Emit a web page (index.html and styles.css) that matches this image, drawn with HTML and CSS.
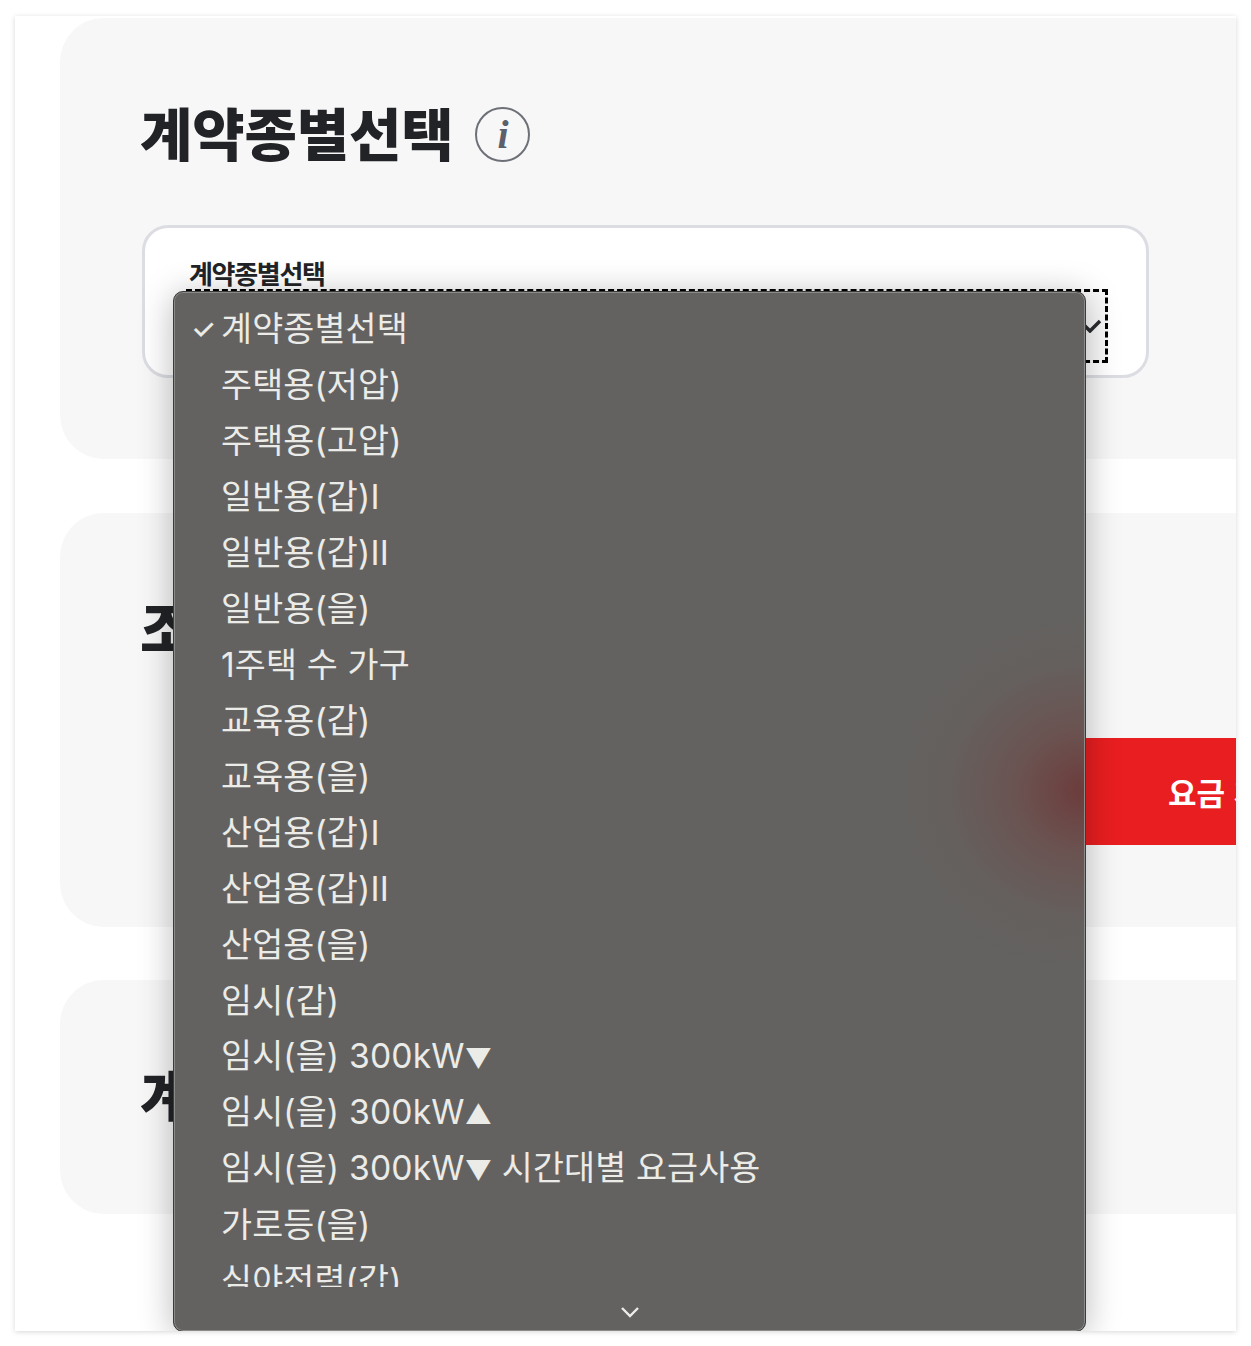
FILE: index.html
```html
<!DOCTYPE html>
<html lang="ko">
<head>
<meta charset="utf-8">
<title>계약종별선택</title>
<link rel="stylesheet" href="styles.css">
</head>
<body>
<div class="frame">
  <section class="panel panel-contract">
    <div class="heading-row">
      <h2 class="heading">계약종별선택</h2>
      <span class="info"><span class="info-i">i</span></span>
    </div>
    <div class="field-card">
      <div class="field-label">계약종별선택</div>
      <div class="select-focus">
        <svg class="select-chevron" viewBox="0 0 24 14" width="24" height="14"><path d="M2 2l10 10L22 2" fill="none" stroke="#2a2c30" stroke-width="3.5"/></svg>
      </div>
    </div>
  </section>

  <section class="panel panel-usage">
    <h2 class="heading">조회조건</h2>
    <div class="action-row">
      <button class="calc-button">요금 계산하기</button>
    </div>
  </section>

  <section class="panel panel-result">
    <h2 class="heading">계산결과</h2>
  </section>

  <div class="menu">
    <ul class="menu-list">
      <li class="menu-item"><span class="menu-check">✓</span><span>계약종별선택</span></li>
      <li class="menu-item"><span class="menu-check"></span><span>주택용(저압)</span></li>
      <li class="menu-item"><span class="menu-check"></span><span>주택용(고압)</span></li>
      <li class="menu-item"><span class="menu-check"></span><span>일반용(갑)I</span></li>
      <li class="menu-item"><span class="menu-check"></span><span>일반용(갑)II</span></li>
      <li class="menu-item"><span class="menu-check"></span><span>일반용(을)</span></li>
      <li class="menu-item"><span class="menu-check"></span><span>1주택 수 가구</span></li>
      <li class="menu-item"><span class="menu-check"></span><span>교육용(갑)</span></li>
      <li class="menu-item"><span class="menu-check"></span><span>교육용(을)</span></li>
      <li class="menu-item"><span class="menu-check"></span><span>산업용(갑)I</span></li>
      <li class="menu-item"><span class="menu-check"></span><span>산업용(갑)II</span></li>
      <li class="menu-item"><span class="menu-check"></span><span>산업용(을)</span></li>
      <li class="menu-item"><span class="menu-check"></span><span>임시(갑)</span></li>
      <li class="menu-item"><span class="menu-check"></span><span>임시(을) 300kW<span class="menu-tri">▼</span></span></li>
      <li class="menu-item"><span class="menu-check"></span><span>임시(을) 300kW<span class="menu-tri">▲</span></span></li>
      <li class="menu-item"><span class="menu-check"></span><span>임시(을) 300kW<span class="menu-tri">▼</span> 시간대별 요금사용</span></li>
      <li class="menu-item"><span class="menu-check"></span><span>가로등(을)</span></li>
      <li class="menu-item"><span class="menu-check"></span><span>심야전력(갑)</span></li>
    </ul>
    <div class="menu-more">
      <svg viewBox="0 0 20 12" width="20" height="12"><path d="M2 2l8 8 8-8" fill="none" stroke="#ecece9" stroke-width="2.4"/></svg>
    </div>
  </div>
</div>
</body>
</html>
```

FILE: styles.css
```css
html, body {
  margin: 0;
  height: 1346px;
  overflow: hidden;
  background: #ffffff;
  font-family: "Noto Sans CJK KR", "Noto Sans", sans-serif;
}

.frame {
  position: relative;
  box-sizing: border-box;
  width: 1221px;
  height: 1315px;
  margin: 16px 0 0 15px;
  padding: 2px 0 0 45px;
  background: #ffffff;
  overflow: hidden;
  box-shadow: 0 1px 5px rgba(0, 0, 0, 0.16);
}

.panel {
  box-sizing: border-box;
  padding: 0 87px 0 82px;
  background: #f7f7f8;
  border-radius: 44px 0 0 44px;
}

.panel-contract { height: 441px; padding-top: 78px; }
.panel-usage { height: 414px; margin-top: 54px; padding-top: 78px; position: relative; }
.panel-result { height: 234px; margin-top: 53px; padding-top: 78px; }

.heading-row {
  display: flex;
  align-items: center;
  gap: 22px;
}

.heading {
  margin: 0 0 0 -2px;
  height: 70px;
  font-size: 57px;
  line-height: 70px;
  font-weight: 900;
  letter-spacing: -0.2px;
  color: #222326;
  white-space: nowrap;
}

.info {
  display: flex;
  align-items: center;
  justify-content: center;
  box-sizing: border-box;
  width: 55px;
  height: 55px;
  margin-top: 7px;
  border: 2px solid #6d7076;
  border-radius: 50%;
}

.info-i {
  font-family: "Liberation Serif", serif;
  font-style: italic;
  font-weight: 700;
  font-size: 40px;
  line-height: 1;
  color: #5c606a;
}

.field-card {
  box-sizing: border-box;
  height: 153px;
  margin-top: 59px;
  padding: 29px 38px 0 41px;
  background: #ffffff;
  border: 3px solid #dcdde3;
  border-radius: 26px;
}

.field-label {
  height: 32px;
  padding-left: 3px;
  font-size: 26px;
  line-height: 32px;
  font-weight: 700;
  letter-spacing: -1.3px;
  color: #222326;
}

.select-focus {
  display: flex;
  align-items: center;
  justify-content: flex-end;
  box-sizing: border-box;
  height: 74px;
  padding-right: 3px;
  border: 3px dashed #000000;
  background: #f9f9fa;
}

.action-row {
  display: flex;
  justify-content: flex-end;
  position: absolute;
  top: 225px;
  left: 700px;
  right: -400px;
}

.calc-button {
  box-sizing: border-box;
  width: 100%;
  height: 107px;
  padding: 0 0 0 408px;
  border: 0;
  background: #e91e20;
  color: #ffffff;
  font-family: inherit;
  font-size: 31px;
  font-weight: 700;
  text-align: left;
  white-space: nowrap;
}

.menu {
  position: absolute;
  left: 158px;
  top: 275px;
  box-sizing: border-box;
  width: 913px;
  height: 1041px;
  padding-top: 9px;
  border: 1px solid #3b3b3a;
  border-radius: 10px;
  background:
    radial-gradient(ellipse 200px 185px at 100% 48%, rgba(112, 45, 45, 0.72), rgba(112, 72, 70, 0.55) 35%, rgba(105, 90, 88, 0.28) 70%, rgba(99, 98, 96, 0) 100%),
    #636260;
  box-shadow: inset 0 0 0 1px #8b8b89, 0 4px 34px rgba(0, 0, 0, 0.28);
}

.menu-list {
  height: 986px;
  margin: 0;
  padding: 0;
  list-style: none;
  overflow: hidden;
}

.menu-item {
  display: flex;
  height: 56px;
  align-items: center;
  padding-left: 19px;
  font-family: "Inter", "Noto Sans CJK KR", sans-serif;
  font-size: 33.7px;
  letter-spacing: 0.15px;
  line-height: 56px;
  color: #ebebe8;
  white-space: nowrap;
}

.menu-check {
  flex: none;
  width: 28px;
  margin-left: -2px;
  margin-right: 2px;
  font-size: 28px;
  font-weight: 500;
}

.menu-tri {
  font-size: 27px;
}

.menu-more {
  display: flex;
  justify-content: center;
  padding-top: 19px;
}
```
